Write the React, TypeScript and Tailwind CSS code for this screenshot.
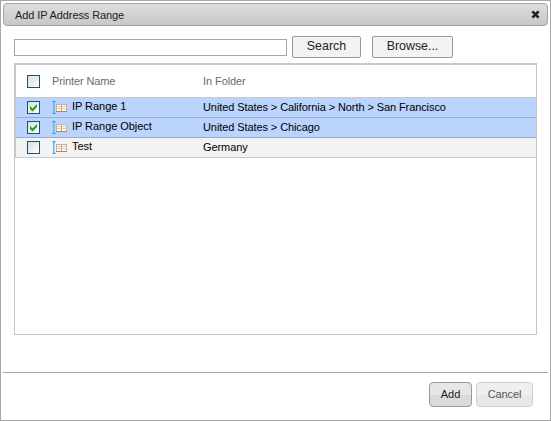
import React from "react";

function Check({ checked = false }: { checked?: boolean }) {
  return (
    <svg width="13" height="13" viewBox="0 0 13 13" className="block shrink-0">
      <defs>
        <linearGradient id="box" x1="0" y1="0" x2="1" y2="1">
          <stop offset="0" stopColor="#dcdcd7" />
          <stop offset="1" stopColor="#ffffff" />
        </linearGradient>
      </defs>
      <rect x="0.5" y="0.5" width="12" height="12" fill="url(#box)" stroke="#1c5180" />
      {checked && <path d="M3 5v3l2.5 2.6L10 6V3L5.5 7.4z" fill="#21a121" />}
    </svg>
  );
}

function RangeIcon() {
  return (
    <svg width="15" height="13" viewBox="0 0 15 13" className="block shrink-0">
      <path d="M1.8 1v11" stroke="#5cb8ee" strokeWidth="1.5" fill="none" />
      <path d="M.5.6h3M.5 12.4h3" stroke="#2d9fe2" strokeWidth="1.2" />
      <rect x="4.5" y="3.5" width="10" height="7" fill="#fffaf2" stroke="#cbb093" />
      <path d="M4 10.5h11" stroke="#b98353" />
      <path d="M9.5 4v6" stroke="#c9a27c" />
      <path d="M5.5 5.5h3M5.5 7.5h3M10.5 5.5h3M10.5 7.5h3" stroke="#b9b3b0" strokeDasharray="1.2 .5" />
    </svg>
  );
}

const rows = [
  { name: "IP Range 1", folder: "United States > California > North > San Francisco", on: true },
  { name: "IP Range Object", folder: "United States > Chicago", on: true },
  { name: "Test", folder: "Germany", on: false },
];

export default function App() {
  return (
    <div className="flex h-[421px] w-[551px] flex-col border border-[#a6a6a6] bg-white px-[2px] pt-[2px] font-['Liberation_Sans',Arial,sans-serif] text-[11px] leading-[13px] text-black">
      <header className="flex h-[23px] shrink-0 items-center justify-between rounded-[4px] border border-[#a5a5a5] bg-linear-to-b from-[#dedede] to-[#c7c7c7] pr-[7px] pl-[11px] text-[#222]">
        <span className="pt-px tracking-[-0.1px] whitespace-nowrap">Add IP Address Range</span>
        <svg width="9" height="9" viewBox="0 0 9 9">
          <path d="M1.4 1.4l6.2 6.2M7.6 1.4L1.4 7.6" stroke="#222" strokeWidth="2.7" />
        </svg>
      </header>

      <div className="mt-[10px] ml-[11px] flex h-[22px] shrink-0 items-center text-[12.4px] text-[#222]">
        <input className="mt-px h-[17px] w-[273px] border border-[#a6a6a6] bg-white outline-none" />
        <button className="ml-[5px] h-[22px] w-[69px] rounded-[2px] border border-[#999] bg-[#f3f3f3] pb-[2px]">Search</button>
        <button className="ml-[11px] h-[22px] w-[81px] rounded-[2px] border border-[#999] bg-[#f3f3f3] pb-[2px]">Browse...</button>
      </div>

      <div className="mt-[5px] ml-[11px] h-[272px] w-[523px] shrink-0 border border-t-2 border-[#c8c8c8]">
        <div className="flex h-[32px] items-center border-l border-[#c8c8c8] pl-[11px] text-[#6b6b6b]">
          <Check />
          <span className="ml-[12px] w-[151px] tracking-[-0.13px]">Printer Name</span>
          <span className="tracking-[-0.08px]">In Folder</span>
        </div>
        {rows.map((r, i) => (
          <div
            key={r.name}
            className={
              "flex h-[20px] items-center border-t border-l pl-[11px] " +
              (r.on ? "bg-[#bad4fd] " : "bg-[#f3f3f3] ") +
              (i === 0 ? "border-[#c8c8c8]" : "border-t-[#9aaccb] border-l-[#c8c8c8]")
            }
          >
            <Check checked={r.on} />
            <span className="ml-[12px] flex w-[151px] items-center">
              <span className="-mt-px">
                <RangeIcon />
              </span>
              <span className="-mt-[2px] ml-[5px] tracking-[-0.05px] whitespace-nowrap">{r.name}</span>
            </span>
            <span className="tracking-[-0.09px] whitespace-nowrap">{r.folder}</span>
          </div>
        ))}
        <div className="h-px bg-[#c8c8c8]" />
      </div>

      <footer className="mt-[37px] flex h-[47px] shrink-0 justify-end gap-[4px] border-t border-[#a6a6a6] pt-[9px] pr-[15px]">
        <button className="h-[25px] w-[43px] rounded-[4px] border border-[#999] bg-linear-to-b from-[#e6e6e6] from-50% to-[#dadada] to-50% text-[#222]">Add</button>
        <button className="h-[25px] w-[57px] rounded-[4px] border border-[#d0d0d0] bg-linear-to-b from-[#efefef] from-50% to-[#e8e8e8] to-50% tracking-[-0.1px] text-[#555]">Cancel</button>
      </footer>
    </div>
  );
}
